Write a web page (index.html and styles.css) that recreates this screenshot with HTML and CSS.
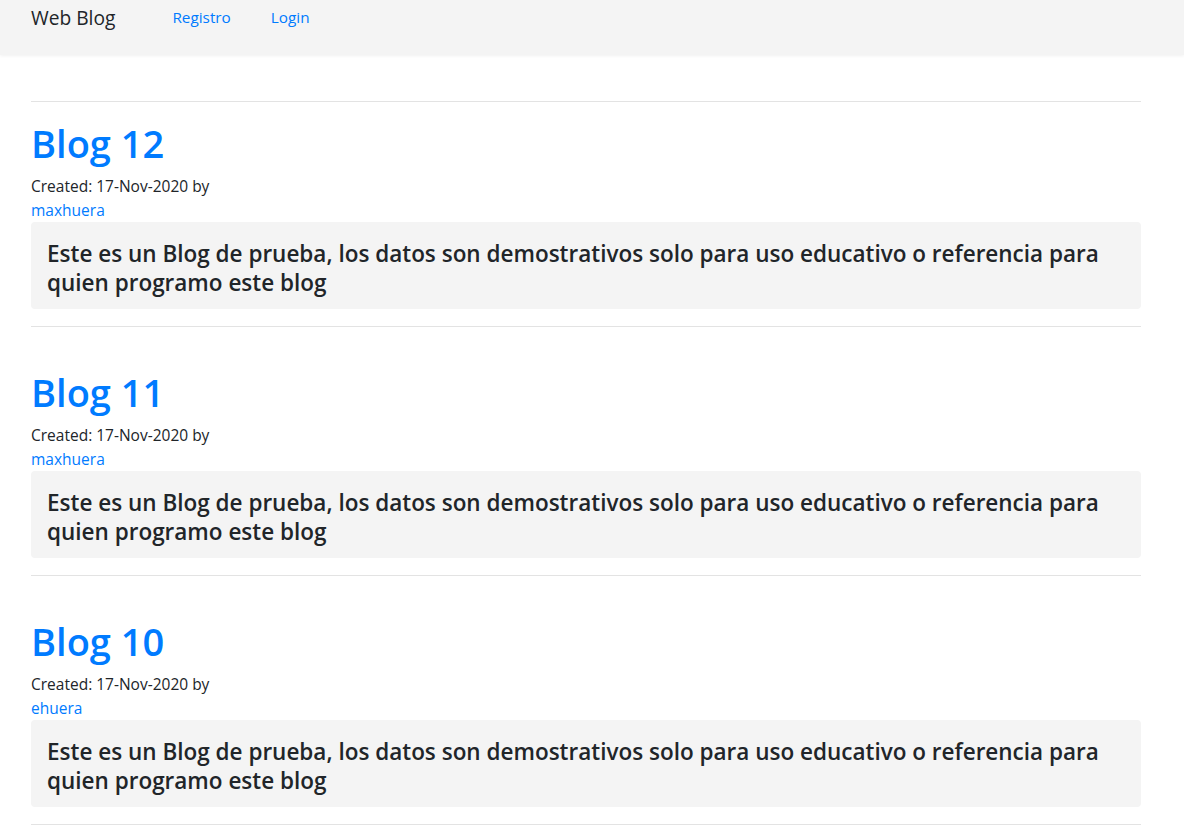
FILE: index.html
```html
<!DOCTYPE html>
<html lang="es">
<head>
<meta charset="utf-8">
<title>Web Blog</title>
<link rel="stylesheet" href="styles.css">
</head>
<body>
<nav class="navbar">
  <div class="container nav-inner">
    <a class="brand" href="#">Web Blog</a>
    <ul class="nav-links">
      <li><a href="#">Registro</a></li>
      <li><a href="#">Login</a></li>
    </ul>
  </div>
</nav>
<main class="container content">
  <hr class="rule">
  <article class="post">
    <h1 class="post-title"><a href="#">Blog 12</a></h1>
    <p class="meta">Created: 17-Nov-2020 by<br><a href="#">maxhuera</a></p>
    <div class="post-body">Este es un Blog de prueba, los datos son demostrativos solo para uso educativo o referencia para quien programo este blog</div>
    <hr class="rule">
  </article>
  <article class="post">
    <h1 class="post-title"><a href="#">Blog 11</a></h1>
    <p class="meta">Created: 17-Nov-2020 by<br><a href="#">maxhuera</a></p>
    <div class="post-body">Este es un Blog de prueba, los datos son demostrativos solo para uso educativo o referencia para quien programo este blog</div>
    <hr class="rule">
  </article>
  <article class="post">
    <h1 class="post-title"><a href="#">Blog 10</a></h1>
    <p class="meta">Created: 17-Nov-2020 by<br><a href="#">ehuera</a></p>
    <div class="post-body">Este es un Blog de prueba, los datos son demostrativos solo para uso educativo o referencia para quien programo este blog</div>
    <hr class="rule">
  </article>
</main>
</body>
</html>
```

FILE: styles.css
```css
* { box-sizing: border-box; }

html, body {
  margin: 0;
  padding: 0;
  background: #fff;
  color: #212529;
  font-family: "Open Sans", "Noto Sans", "Liberation Sans", sans-serif;
}

a {
  color: #007bff;
  text-decoration: none;
}

.container {
  width: 1110px;
  margin-left: 31px;
}

.navbar {
  height: 55px;
  background: #f4f4f4;
  box-shadow: 0 1px 3px rgba(0, 0, 0, 0.06);
}

.nav-inner {
  display: flex;
  align-items: center;
  height: 34px;
}

.brand {
  color: #212529;
  font-size: 19.2px;
  margin-right: 57px;
}

.nav-links {
  display: flex;
  gap: 40px;
  list-style: none;
  margin: 0;
  padding: 0;
  font-size: 15.3px;
}

.content {
  padding-top: 46px;
}

.rule {
  border: 0;
  border-top: 1px solid #e3e3e3;
  margin: 0;
}

.post {
  padding-top: 20px;
}

.post + .post {
  padding-top: 44px;
}

.post-title {
  margin: 0 0 9px;
  font-size: 38px;
  line-height: 43px;
  font-weight: 600;
}

.meta {
  margin: 0;
  font-size: 15.5px;
  line-height: 24px;
}

.post-body {
  background: #f4f4f4;
  border-radius: 4px;
  padding: 18px 16px 12px;
  font-size: 22.5px;
  line-height: 28.5px;
  font-weight: 600;
  margin-bottom: 17px;
}
```
